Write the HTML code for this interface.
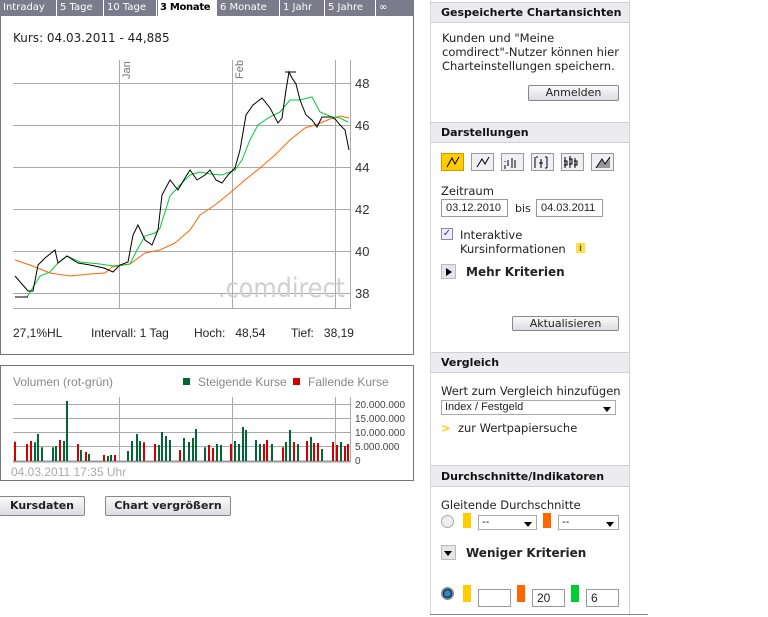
<!DOCTYPE html>
<html><head><meta charset="utf-8"><style>
body{margin:0;width:768px;height:617px;background:#fff;font-family:"Liberation Sans",sans-serif;position:relative;overflow:hidden;font-size:12px;color:#222}
.a{position:absolute}
.tabs{left:0;top:0;width:414px;height:16px;background:#7b7b8b}
.tab{position:absolute;top:0;height:16px;line-height:15px;color:#fff;font-family:"DejaVu Sans",sans-serif;font-size:10px;border-right:1px solid #fff;padding-left:3px;box-sizing:border-box;white-space:nowrap;overflow:hidden}
.hdr{position:absolute;left:431px;width:198px;background:#ececf0;border-top:1px solid #d0d0d8;border-bottom:1px solid #d0d0d8;font-weight:bold;font-size:11px;font-family:"DejaVu Sans",sans-serif;padding-left:10px;box-sizing:border-box;color:#111}
.btn{position:absolute;background:linear-gradient(#fafafa,#dcdce2);border:1px solid #888;border-radius:2px;text-align:center;font-size:11px;font-family:"DejaVu Sans",sans-serif;box-sizing:border-box}
.t{position:absolute;font-family:"DejaVu Sans",sans-serif;font-size:11.5px;color:#222;white-space:nowrap}
.inp{position:absolute;border:1px solid #999;background:#fff;box-sizing:border-box;font-size:11px;padding-left:4px}
.sel{position:absolute;border:1px solid #aaa;background:#fff;box-sizing:border-box;font-size:11px;padding-left:3px}
.sel:after{content:"";position:absolute;right:4px;top:6px;border:4px solid transparent;border-top:5px solid #000}
.ic{position:absolute;top:153px;width:23px;height:18px;border:1px solid #999;box-sizing:border-box;background:#f0f0f4}
</style></head><body>
<div class="a tabs">
<div class="tab" style="left:0;width:57px">Intraday</div>
<div class="tab" style="left:57px;width:47px">5 Tage</div>
<div class="tab" style="left:104px;width:53px">10 Tage</div>
<div class="tab" style="left:157px;width:60px;background:#fff;color:#000;font-weight:bold;border-left:1px solid #7b7b8b;padding-left:2px;letter-spacing:-0.3px">3 Monate</div>
<div class="tab" style="left:217px;width:63px">6 Monate</div>
<div class="tab" style="left:280px;width:45px">1 Jahr</div>
<div class="tab" style="left:325px;width:51px">5 Jahre</div>
<div class="tab" style="left:376px;width:38px;border:none">∞</div>
</div>
<div class="a" style="left:0;top:16px;width:414px;height:339px;border:1px solid #777;border-top:none;box-sizing:border-box"></div>
<div class="a" style="left:0;top:365px;width:414px;height:116px;border:1px solid #777;box-sizing:border-box"></div>
<svg class="a" style="left:0;top:0" width="430" height="490">
<g stroke="#aaa" stroke-width="1" fill="none">
<path d="M13 83.5H350M13 125.5H350M13 167.5H350M13 209.5H350M13 251.5H350M13 293.5H350M13 308.5H350"/>
<path d="M119.5 60V309M232.5 60V309M335.5 60V309M350.5 60V309"/>
<path d="M13 404.5H350M13 418.5H350M13 432.5H350M13 446.5H350"/>
<path d="M119.5 397V462M232.5 397V462M335.5 397V462M350.5 397V462"/>
</g>
<path d="M13 461.5H350" stroke="#999" stroke-width="2"/>
<text x="218" y="297" font-size="27" fill="#d0d0d0" font-family="DejaVu Sans" textLength="127" lengthAdjust="spacingAndGlyphs">.comdirect</text>
<text transform="translate(130,79) rotate(-90)" font-size="11" fill="#777" font-family="Liberation Sans">Jan</text>
<text transform="translate(243,79) rotate(-90)" font-size="11" fill="#777" font-family="Liberation Sans">Feb</text>
<g font-size="13" fill="#333" font-family="Liberation Sans"><text x="355" y="88">48</text><text x="355" y="130">46</text><text x="355" y="172">44</text><text x="355" y="214">42</text><text x="355" y="256">40</text><text x="355" y="298">38</text></g>
<g font-size="10" fill="#444" font-family="Liberation Sans"><text x="355" y="408">20.000.000</text><text x="355" y="422">15.000.000</text><text x="355" y="436">10.000.000</text><text x="355" y="450">5.000.000</text><text x="355" y="464">0</text></g>
<polyline fill="none" stroke="#ff6600" stroke-width="1" points="15,260 30,265 50,273 70,276 90,274 105,273 112,267 130,264 145,253 160,250 175,243 190,230 200,215 215,205 230,193 245,180 260,168 275,155 290,140 305,128 318,124 330,119 340,116 349,118"/>
<polyline fill="none" stroke="#00cc33" stroke-width="1" points="15,297 27,297 40,276 50,272 58,263 67,256 80,262 100,264 113,266 130,264 137,250 145,236 155,233 160,228 170,196 180,185 190,175 200,172 210,174 222,175 235,170 242,160 250,140 258,125 268,118 280,112 290,100 300,100 312,97 320,112 332,117 340,118 348,122"/>
<polyline fill="none" stroke="#000" stroke-width="1" points="15,276 28,291 33,291 38,265 45,258 55,250 58,263 67,256 78,263 90,265 104,268 113,272 120,265 128,262 133,235 138,225 145,240 152,245 158,230 162,195 170,180 178,190 185,178 190,170 197,180 205,175 210,170 216,180 222,183 228,175 235,168 240,150 246,115 253,105 262,98 270,108 278,123 282,118 286,90 289,72 292,78 296,84 300,100 306,115 312,120 317,127 322,117 332,117 336,120 340,125 345,130 349,150"/>
<path d="M285 72H296M15 297H28" stroke="#000"/>
<g stroke-width="2" id="vb"></g>
</svg>
<script>
(function(){var d="15r245 27r252 31r243 35g247 38g222 42g262 53g262 56g258 60r240 64g243 67g123 78r252 81g270 86r276 89g282 104r285 108g288 111g285 115r285 128g273 132g243 137g222 140g243 144r247 155r252 159g255 162g216 166g228 170g240 180r270 184g234 189g246 193g234 196g207 205g262 209r255 213r264 217g252 221g255 231r252 235g243 239g252 243g201 246g210 256g240 260g252 264r252 267r240 272g252 283r262 286g246 290g210 294r246 298g252 307r243 311g231 314r249 318r249 322g267 333r246 337r255 341g246 345r258 348r252".split(" ");var g=document.getElementById("vb"),s="";d.forEach(function(e){var m=e.match(/(\d+)([rg])(\d+)/);var y=360+m[3]/3;s+='<line x1="'+m[1]+'" x2="'+m[1]+'" y1="'+y.toFixed(1)+'" y2="461" stroke="'+(m[2]=="r"?"#d00000":"#006633")+'"/>';});g.innerHTML=s;})();
</script>
<div class="t" style="left:13px;top:31px;font-size:12px">Kurs: 04.03.2011 - 44,885</div>
<div class="t" style="left:13px;top:326px;font-family:'Liberation Sans';font-size:12px">27,1%HL</div>
<div class="t" style="left:91px;top:326px;font-family:'Liberation Sans';font-size:12px">Intervall: 1 Tag</div>
<div class="t" style="left:194px;top:326px;font-family:'Liberation Sans';font-size:12px">Hoch:&nbsp;&nbsp; 48,54</div>
<div class="t" style="left:291px;top:326px;font-family:'Liberation Sans';font-size:12px">Tief:&nbsp;&nbsp; 38,19</div>
<div class="t" style="left:13px;top:375px;font-family:'Liberation Sans';font-size:12px;color:#888">Volumen (rot-grün)</div>
<div class="a" style="left:183px;top:378px;width:7px;height:7px;background:#006633"></div>
<div class="t" style="left:198px;top:375px;font-family:'Liberation Sans';font-size:12px;color:#888">Steigende Kurse</div>
<div class="a" style="left:293px;top:378px;width:7px;height:7px;background:#d00000"></div>
<div class="t" style="left:308px;top:375px;font-family:'Liberation Sans';font-size:12px;color:#888">Fallende Kurse</div>
<div class="t" style="left:11px;top:465px;font-family:'Liberation Sans';font-size:12px;color:#aaa">04.03.2011 17:35 Uhr</div>
<div class="btn" style="left:-1px;top:496px;width:86px;height:20px;line-height:18px;font-weight:bold">Kursdaten</div>
<div class="btn" style="left:105px;top:496px;width:126px;height:20px;line-height:18px;font-weight:bold">Chart vergrößern</div>

<div class="a" style="left:430px;top:0;width:1px;height:614px;background:#d8d8dc"></div>
<div class="a" style="left:629px;top:0;width:1px;height:614px;background:#d0d0d8"></div>
<div class="a" style="left:430px;top:614px;width:218px;height:1px;background:#888"></div>
<div class="hdr" style="top:2px;height:21px;line-height:20px">Gespeicherte Chartansichten</div>
<div class="t" style="left:442px;top:31px;line-height:14px">Kunden und "Meine<br>comdirect"-Nutzer können hier<br>Charteinstellungen speichern.</div>
<div class="btn" style="left:528px;top:85px;width:91px;height:16px;line-height:14px">Anmelden</div>
<div class="hdr" style="top:122px;height:21px;line-height:20px">Darstellungen</div>
<div class="ic" style="left:441px;background:#ffcc00;border-color:#c90"></div>
<div class="ic" style="left:471px"></div><div class="ic" style="left:501px"></div><div class="ic" style="left:531px"></div><div class="ic" style="left:561px"></div><div class="ic" style="left:591px"></div>
<svg class="a" style="left:441px;top:153px" width="175" height="18"><g stroke="#000" fill="none"><path d="M6 14L11 5L14 11L18 4"/><path d="M36 14L41 6L44 11L48 4"/><path d="M64 12V16M67 7V13M71 5V15M74 7V15M64 8v1"/><path d="M94 4V15M95 4h2M100 6V15M98 10h4M106 4V15M104 4h2M104 15h2"/><path d="M124 4V15M123 8h3v4h-3M129 3V15M128 6h3v5h-3M134 5V15M133 8h3v4h-3"/></g><path d="M155 15L161 6L164 11L169 4V15Z" fill="#999"/><path d="M155 15L161 6L164 11L169 4" stroke="#000" fill="none"/></svg>
<div class="t" style="left:441px;top:184px">Zeitraum</div>
<div class="inp" style="left:441px;top:199px;width:67px;height:18px;line-height:16px">03.12.2010</div>
<div class="t" style="left:515px;top:202px;font-size:11px">bis</div>
<div class="inp" style="left:536px;top:199px;width:67px;height:18px;line-height:16px">04.03.2011</div>
<div class="a" style="left:441px;top:228px;width:12px;height:12px;border:1px solid #8a8a99;box-sizing:border-box;background:#eef;font-size:10px;line-height:10px;text-align:center;color:#339">✓</div>
<div class="t" style="left:460px;top:228px;line-height:14px">Interaktive<br>Kursinformationen</div>
<div class="a" style="left:576px;top:243px;width:9px;height:10px;background:#ffdd44;font-size:9px;font-weight:bold;text-align:center;line-height:10px;color:#553">i</div>
<div class="a" style="left:441px;top:264px;width:15px;height:15px;background:#e4e4ea;border:1px solid #bbb;box-sizing:border-box"></div>
<div class="a" style="left:446px;top:268px;border:4px solid transparent;border-left:6px solid #000;border-right:none;width:0;height:0"></div>
<div class="t" style="left:466px;top:265px;font-weight:bold;font-size:12px">Mehr Kriterien</div>
<div class="btn" style="left:512px;top:316px;width:107px;height:15px;line-height:13px">Aktualisieren</div>
<div class="hdr" style="top:352px;height:21px;line-height:20px">Vergleich</div>
<div class="t" style="left:441px;top:384px">Wert zum Vergleich hinzufügen</div>
<div class="sel" style="left:441px;top:400px;width:175px;height:15px;line-height:13px;font-family:'Liberation Sans'">Index / Festgeld</div>
<div class="t" style="left:441px;top:421px"><span style="color:#fc0;font-weight:bold">&gt;</span>&nbsp; zur Wertpapiersuche</div>
<div class="hdr" style="top:465px;height:22px;line-height:21px">Durchschnitte/Indikatoren</div>
<div class="t" style="left:441px;top:498px">Gleitende Durchschnitte</div>
<div class="a" style="left:441px;top:515px;width:11px;height:11px;border-radius:50%;border:1px solid #aaa;background:#eee"></div>
<div class="a" style="left:463px;top:513px;width:8px;height:15px;background:#ffcc00"></div>
<div class="sel" style="left:478px;top:515px;width:59px;height:15px;line-height:13px">--</div>
<div class="a" style="left:543px;top:513px;width:8px;height:15px;background:#ff6600"></div>
<div class="sel" style="left:558px;top:515px;width:61px;height:15px;line-height:13px">--</div>
<div class="a" style="left:441px;top:545px;width:15px;height:15px;background:#e4e4ea;border:1px solid #bbb;box-sizing:border-box"></div>
<div class="a" style="left:444px;top:551px;border:4px solid transparent;border-top:5px solid #000;border-bottom:none;width:0;height:0"></div>
<div class="t" style="left:466px;top:546px;font-weight:bold;font-size:12px">Weniger Kriterien</div>
<div class="a" style="left:441px;top:587px;width:11px;height:11px;border-radius:50%;border:1px solid #888;background:radial-gradient(#38c 30%,#124 60%,#ddd 70%)"></div>
<div class="a" style="left:463px;top:585px;width:8px;height:17px;background:#ffcc00"></div>
<div class="inp" style="left:478px;top:589px;width:33px;height:18px"></div>
<div class="a" style="left:517px;top:585px;width:8px;height:17px;background:#ff6600"></div>
<div class="inp" style="left:532px;top:589px;width:33px;height:18px;line-height:16px;font-size:12px">20</div>
<div class="a" style="left:571px;top:585px;width:8px;height:17px;background:#00cc33"></div>
<div class="inp" style="left:586px;top:589px;width:33px;height:18px;line-height:16px;font-size:12px">6</div>
</body></html>
